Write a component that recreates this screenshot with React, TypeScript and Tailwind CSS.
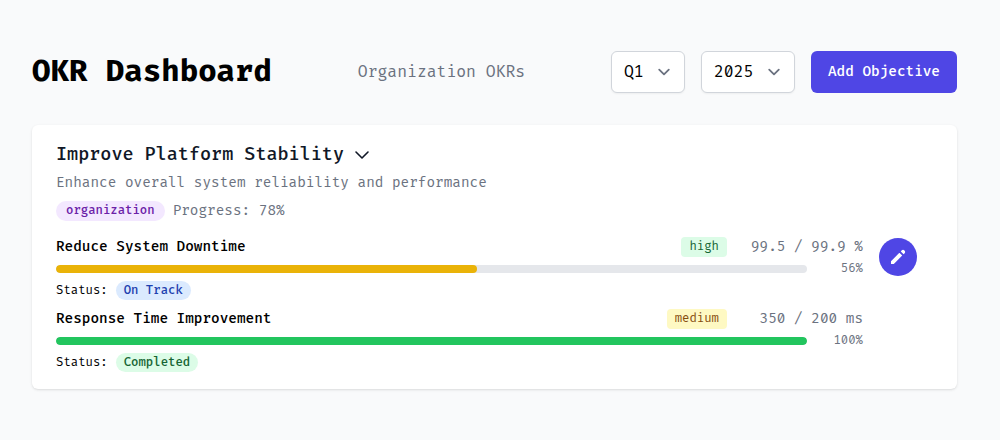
import React from "react";

type KeyResult = {
  title: string;
  priority: string;
  priorityClass: string;
  value: string;
  percent: number;
  barClass: string;
  status: string;
  statusClass: string;
};

const keyResults: KeyResult[] = [
  {
    title: "Reduce System Downtime",
    priority: "high",
    priorityClass: "bg-[#dcfce7] text-[#166534]",
    value: "99.5 / 99.9 %",
    percent: 56,
    barClass: "bg-[#eab308]",
    status: "On Track",
    statusClass: "bg-[#dbeafe] text-[#1e40af]",
  },
  {
    title: "Response Time Improvement",
    priority: "medium",
    priorityClass: "bg-[#fef9c3] text-[#854d0e]",
    value: "350 / 200 ms",
    percent: 100,
    barClass: "bg-[#22c55e]",
    status: "Completed",
    statusClass: "bg-[#dcfce7] text-[#166534]",
  },
];

function Select({ value, className }: { value: string; className: string }) {
  return (
    <button
      className={`flex h-[42px] items-center justify-between rounded-md border border-[#d1d5db] bg-white pr-2 pl-3 text-base shadow-xs ${className}`}
    >
      <span>{value}</span>
      <svg
        viewBox="0 0 20 20"
        className="h-6 w-6 text-[#6b7280]"
        fill="none"
        stroke="currentColor"
        strokeWidth="1.5"
        strokeLinecap="round"
        strokeLinejoin="round"
      >
        <path d="M6 8l4 4 4-4" />
      </svg>
    </button>
  );
}

function KeyResultRow({ item }: { item: KeyResult }) {
  return (
    <div className="h-[72px]">
      <div className="flex h-6 items-center">
        <span className="flex-1 text-sm font-medium">{item.title}</span>
        <span className={`flex h-5 items-center rounded px-2 text-xs ${item.priorityClass}`}>
          {item.priority}
        </span>
        <span className="w-[136px] text-right text-sm text-[#6b7280]">{item.value}</span>
      </div>
      <div className="flex h-5 items-center">
        <div className="h-2 flex-1 overflow-hidden rounded-full bg-[#e5e7eb]">
          <div className={`h-full rounded-full ${item.barClass}`} style={{ width: `${item.percent}%` }} />
        </div>
        <span className="w-14 text-right text-xs text-[#6b7280]">{item.percent}%</span>
      </div>
      <div className="flex h-6 items-center text-xs">
        <span>Status:</span>
        <span className={`mb-px ml-2 flex h-[19px] items-center rounded-full px-2 font-medium ${item.statusClass}`}>
          {item.status}
        </span>
      </div>
    </div>
  );
}

export default function App() {
  return (
    <div className="min-h-[440px] bg-[#f9fafb] pt-[51px] pr-[43px] pl-8 font-['Fira_Code','Fira_Mono','DejaVu_Sans_Mono',monospace] text-black">
      <header className="flex h-[42px] items-center justify-between">
        <h1 className="text-3xl font-bold">OKR Dashboard</h1>
        <p className="text-base text-[#6b7280]">Organization OKRs</p>
        <div className="flex gap-4">
          <Select value="Q1" className="w-[74px]" />
          <Select value="2025" className="w-[94px]" />
          <button className="flex h-[42px] w-[146px] items-center justify-center rounded-md bg-[#4f46e5] pb-px text-sm font-medium text-white">
            Add Objective
          </button>
        </div>
      </header>

      <main className="mt-8 flex h-[264px] rounded-md bg-white px-6 pt-4 shadow-sm">
        <section className="w-[807px]">
          <div className="mt-px flex h-[26px] items-center">
            <h2 className="text-lg font-medium text-[#111827]">Improve Platform Stability</h2>
            <svg
              viewBox="0 0 16 16"
              className="ml-2.5 h-4 w-4 text-[#111827]"
              fill="none"
              stroke="currentColor"
              strokeWidth="1.6"
              strokeLinecap="round"
              strokeLinejoin="round"
            >
              <path d="M2 5l6 6 6-6" />
            </svg>
          </div>
          <p className="mt-[3px] flex h-6 items-center text-sm text-[#6b7280]">
            Enhance overall system reliability and performance
          </p>
          <div className="mt-1 flex h-6 items-center">
            <span className="flex h-5 items-center rounded-full bg-[#f3e8ff] px-2.5 text-xs font-medium text-[#6b21a8]">
              organization
            </span>
            <span className="ml-2 text-sm text-[#6b7280]">Progress: 78%</span>
          </div>
          <div className="mt-3">
            {keyResults.map((item) => (
              <KeyResultRow key={item.title} item={item} />
            ))}
          </div>
        </section>
        <button
          aria-label="Edit objective"
          className="mt-[97px] ml-4 flex h-[38px] w-[38px] items-center justify-center rounded-full bg-[#4f46e5] text-white"
        >
          <svg viewBox="0 0 20 20" className="h-5 w-5" fill="currentColor">
            <path d="M13.586 3.586a2 2 0 112.828 2.828l-.793.793-2.828-2.828.793-.793zM11.379 5.793L3 14.172V17h2.828l8.38-8.379-2.83-2.828z" />
          </svg>
        </button>
      </main>
    </div>
  );
}
